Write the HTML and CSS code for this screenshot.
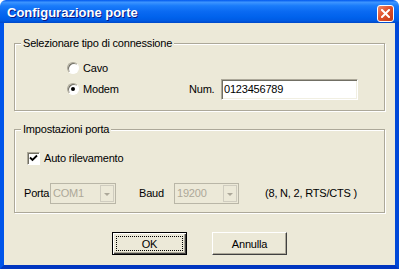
FILE: index.html
```html
<!DOCTYPE html>
<html lang="it">
<head>
  <meta charset="UTF-8">
  <title>Configurazione porte</title>
  <link rel="stylesheet" href="styles.css">
</head>
<body>

  <div class="window">
    <!-- Title bar -->
    <div class="titlebar">
      <span class="title">Configurazione porte</span>
      <button class="close-btn" title="Chiudi">
        <svg width="9" height="9" viewBox="0 0 9 9"><path d="M1 1 L8 8 M8 1 L1 8" stroke="#fff" stroke-width="2" stroke-linecap="square"/></svg>
      </button>
    </div>

    <div class="frame">
      <div class="client">

        <!-- Connection type -->
        <fieldset class="group group-conn">
          <legend>Selezionare tipo di connessione</legend>
          <div class="row row-cavo">
            <label class="radio"><span class="radio-dot"></span>Cavo</label>
          </div>
          <div class="row row-modem">
            <label class="radio radio-wide"><span class="radio-dot checked"></span>Modem</label>
            <span class="num-label">Num.</span>
            <input class="edit" type="text" value="0123456789">
          </div>
        </fieldset>

        <!-- Port settings -->
        <fieldset class="group group-port">
          <legend>Impostazioni porta</legend>
          <div class="row row-check">
            <label class="check">
              <span class="check-box">
                <svg width="9" height="9" viewBox="0 0 9 9"><path d="M1 3.5 L3.5 6 L8 1.5" fill="none" stroke="#000" stroke-width="1.8"/></svg>
              </span>
              Auto rilevamento
            </label>
          </div>
          <div class="row row-combos">
            <span class="field-label porta">Porta</span>
            <div class="combo combo-port">
              <span class="combo-text">COM1</span>
              <span class="combo-btn"></span>
            </div>
            <span class="field-label baud">Baud</span>
            <div class="combo combo-baud">
              <span class="combo-text">19200</span>
              <span class="combo-btn"></span>
            </div>
            <span class="params">(8, N, 2, RTS/CTS )</span>
          </div>
        </fieldset>

        <div class="buttons">
          <button class="btn btn-default"><span class="focus">OK</span></button>
          <button class="btn">Annulla</button>
        </div>

      </div>
    </div>
  </div>

</body>
</html>
```

FILE: styles.css
```css
/* whole dialog sits at the top-left of the page */
body {
  margin: 0;
  font-family: "Liberation Sans", Arial, sans-serif;
  font-size: 11px;
  line-height: 13px;
  letter-spacing: -0.2px;
  color: #000;
  background: #fff;
}

.window {
  width: 399px;
  height: 269px;
  display: flex;
  flex-direction: column;
}

/* XP blue caption */
.titlebar {
  height: 23px;
  display: flex;
  align-items: center;
  justify-content: space-between;
  padding: 0 5px 0 7px;
  background: linear-gradient(#0058ee 0%, #3d95ff 10%, #1a7cfa 25%, #0a6af2 50%, #0062ec 75%, #005ae3 90%, #0048c8 100%);
  border-radius: 6px 6px 0 0;
}

.title {
  color: #fff;
  font-weight: bold;
  font-size: 13px;
  letter-spacing: 0;
  text-shadow: 1px 1px 0 #0a1883;
  padding-top: 1px;
}

.close-btn {
  width: 17px;
  height: 17px;
  padding: 0;
  margin-top: 3px;
  border: 1px solid #fff;
  border-radius: 3px;
  background: linear-gradient(135deg, #f08a6a 0%, #e0512d 45%, #c23a14 100%);
  display: flex;
  align-items: center;
  justify-content: center;
}

.frame {
  flex: 1;
  display: flex;
  border-left: 4px solid #0055ea;
  border-right: 4px solid #0048d8;
  border-bottom: 4px solid #0036c0;
}

.client {
  flex: 1;
  background: #ece9d8;
  padding: 14px 10px 0 10px;
}

/* etched group box */
.group {
  margin: 0;
  padding: 0;
  border: 1px solid #aca899;
  box-shadow: inset 1px 1px 0 #fff, 1px 1px 0 #fff;
}

.group legend {
  margin-left: 6px;
  padding: 0 2px;
  background: #ece9d8;
  line-height: 13px;
}

.group-conn {
  padding: 8px 0 10px 0;
}

.group-port {
  margin-top: 12px;
  padding: 12px 0 8px 0;
}

.row {
  display: flex;
  align-items: center;
}

.row-cavo {
  height: 20px;
  padding-left: 52px;
}

.row-modem {
  height: 22px;
  padding-left: 52px;
}

.radio {
  display: flex;
  align-items: center;
  gap: 4px;
}

.radio-wide {
  width: 122px;
}

.radio-dot {
  width: 12px;
  height: 12px;
  box-sizing: border-box;
  border-radius: 50%;
  border: 1px solid;
  border-color: #aca899 #fff #fff #aca899;
  box-shadow: inset 1px 1px 0 #716f64;
  background: #fff;
  position: relative;
}

.radio-dot.checked::after {
  content: "";
  position: absolute;
  left: 3px;
  top: 3px;
  width: 4px;
  height: 4px;
  border-radius: 50%;
  background: #000;
}

.num-label {
  width: 32px;
}

.edit {
  width: 137px;
  height: 21px;
  box-sizing: border-box;
  margin: 0;
  padding: 0 2px;
  border: 1px solid;
  border-color: #aca899 #fff #fff #aca899;
  box-shadow: inset 1px 1px 0 #716f64, inset -1px -1px 0 #f1efe2;
  background: #fff;
  font-family: "Liberation Sans", Arial, sans-serif;
  font-size: 11px;
  letter-spacing: -0.2px;
  outline: none;
}

.row-check {
  height: 20px;
  padding-left: 12px;
}

.check {
  display: flex;
  align-items: center;
  gap: 4px;
}

.check-box {
  width: 13px;
  height: 13px;
  box-sizing: border-box;
  border: 1px solid;
  border-color: #aca899 #fff #fff #aca899;
  box-shadow: inset 1px 1px 0 #716f64;
  background: #fff;
  display: flex;
  align-items: center;
  justify-content: center;
}

.row-combos {
  height: 21px;
  margin-top: 15px;
  padding-left: 9px;
}

.field-label {
  overflow: hidden;
  white-space: nowrap;
}

.porta {
  width: 26px;
}

.baud {
  width: 35px;
  margin-left: 23px;
}

.combo {
  height: 21px;
  box-sizing: border-box;
  border: 1px solid #b9b6a7;
  display: flex;
  align-items: center;
  justify-content: space-between;
  padding: 0 1px 0 2px;
}

.combo-port {
  width: 66px;
}

.combo-baud {
  width: 65px;
}

.combo-text {
  color: #aca899;
}

.combo-btn {
  width: 14px;
  height: 17px;
  box-sizing: border-box;
  border: 1px solid #cfccbf;
  position: relative;
}

.combo-btn::after {
  content: "";
  position: absolute;
  left: 3px;
  top: 7px;
  border-left: 3px solid transparent;
  border-right: 3px solid transparent;
  border-top: 3px solid #aca899;
}

.params {
  margin-left: 26px;
}

.buttons {
  display: flex;
  justify-content: center;
  gap: 25px;
  margin-top: 19px;
}

/* classic raised push button */
.btn {
  width: 75px;
  height: 23px;
  box-sizing: border-box;
  padding: 0;
  background: #ece9d8;
  border: 1px solid;
  border-color: #fff #404040 #404040 #fff;
  box-shadow: inset -1px -1px 0 #aca899;
  font-family: "Liberation Sans", Arial, sans-serif;
  font-size: 11px;
  letter-spacing: -0.2px;
  color: #000;
}

.btn-default {
  border: 1px solid #000;
  box-shadow: inset 1px 1px 0 #fff, inset -1px -1px 0 #404040, inset -2px -2px 0 #aca899;
  display: flex;
  padding: 3px;
}

.focus {
  flex: 1;
  border: 1px dotted #000;
  display: flex;
  align-items: center;
  justify-content: center;
}
```
